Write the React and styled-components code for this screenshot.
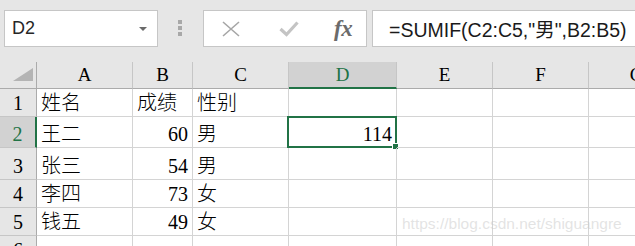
import React from "react";
import styled, { createGlobalStyle } from "styled-components";

const GlobalStyle = createGlobalStyle`
  body {
    margin: 0;
    background: #ffffff;
    overflow: hidden;
  }
`;

const Page = styled.div`
  position: relative;
  width: 635px;
  height: 246px;
  overflow: hidden;
  background: #ffffff;
`;

const Toolbar = styled.div`
  height: 62px;
  box-sizing: border-box;
  padding: 10px 0 0 4px;
  display: flex;
  align-items: flex-start;
  background: #e6e6e6;
`;

const Box = styled.div`
  height: 37px;
  box-sizing: border-box;
  border: 1px solid #c6c6c6;
  background: #ffffff;
  display: flex;
  align-items: center;
`;

const NameBox = styled(Box)`
  width: 154px;
  padding: 0 10px 0 7px;
  justify-content: space-between;
  font-family: "Liberation Sans", Arial, sans-serif;
  font-size: 18px;
  color: #262626;
`;

const DropArrow = styled.span`
  width: 0;
  height: 0;
  border-left: 4px solid transparent;
  border-right: 4px solid transparent;
  border-top: 4px solid #6a6a6a;
  margin-top: 1px;
`;

const Grip = styled.div`
  margin: 10px 21px 0 20px;
  display: flex;
  flex-direction: column;
  gap: 2px;
  & span {
    width: 4px;
    height: 4px;
    background: #a8a8a8;
  }
`;

const FxButtons = styled(Box)`
  width: 164px;
  padding: 0 0 0 18px;
`;

const IconSlot = styled.div`
  width: ${p => p.w}px;
  display: flex;
  align-items: center;
  justify-content: flex-start;
`;

const FxLabel = styled.span`
  font-family: "Liberation Serif", "Times New Roman", serif;
  font-style: italic;
  font-weight: 700;
  font-size: 23px;
  color: #6b6b6b;
  letter-spacing: -0.5px;
`;

const FormulaBox = styled(Box)`
  flex: 1;
  margin-left: 5px;
  border-right: none;
  padding-left: 16px;
  font-family: "Liberation Sans", Arial, "Noto Sans CJK SC", sans-serif;
  font-size: 19.5px;
  color: #1a1a1a;
  white-space: nowrap;
`;

const Sheet = styled.div`
  display: grid;
  grid-template-columns: 37px 96px 60px 96px 108px 96px 96px 96px;
  grid-template-rows: 27px 28px 31px 32px 28px 28px 28px;
  height: 184px;
  overflow: hidden;
  font-family: "Liberation Serif", "Noto Sans CJK SC", serif;
  color: #000000;
`;

const Corner = styled.div`
  position: relative;
  background: #e6e6e6;
  border-right: 1px solid #ababab;
  border-bottom: 1px solid #ababab;
  box-sizing: border-box;
  &::after {
    content: "";
    position: absolute;
    right: 3px;
    bottom: 7px;
    width: 0;
    height: 0;
    border-left: 20px solid transparent;
    border-bottom: 13px solid #b4b4b4;
  }
`;

const ColHead = styled.div`
  box-sizing: border-box;
  background: ${p => (p.active ? "#d2d2d2" : "#e6e6e6")};
  border-right: 1px solid #c6c6c6;
  border-bottom: ${p => (p.active ? "2px solid #217346" : "1px solid #ababab")};
  color: ${p => (p.active ? "#217346" : "#000000")};
  font-size: 19px;
  display: flex;
  align-items: center;
  justify-content: center;
  padding-top: ${p => (p.active ? "1px" : "0")};
`;

const RowHead = styled.div`
  box-sizing: border-box;
  background: ${p => (p.active ? "#d2d2d2" : "#e6e6e6")};
  border-right: ${p => (p.active ? "2px solid #217346" : "1px solid #ababab")};
  border-bottom: 1px solid #c6c6c6;
  color: ${p => (p.active ? "#217346" : "#000000")};
  font-size: 20px;
  display: flex;
  align-items: flex-end;
  justify-content: center;
  padding-bottom: 1px;
  line-height: 24px;
`;

const Cell = styled.div`
  position: relative;
  box-sizing: border-box;
  border-right: 1px solid #d4d4d4;
  border-bottom: 1px solid #d4d4d4;
  font-size: 20px;
  font-weight: 300;
  line-height: 24px;
  display: flex;
  align-items: flex-end;
  justify-content: ${p => (p.num ? "flex-end" : "flex-start")};
  padding: 0 4px 1px 4px;
  white-space: nowrap;

  ${p =>
    p.selected &&
    `
    &::before {
      content: "";
      position: absolute;
      top: -1px;
      left: -2px;
      right: -1px;
      bottom: -1px;
      border: 2px solid #217346;
      pointer-events: none;
    }
    &::after {
      content: "";
      position: absolute;
      right: -3px;
      bottom: -3px;
      width: 5px;
      height: 5px;
      background: #217346;
      border: 1px solid #ffffff;
    }
  `}
`;

const Watermark = styled.div`
  position: absolute;
  left: 402px;
  top: 215px;
  font-family: "Liberation Sans", Arial, sans-serif;
  font-size: 15.5px;
  color: rgba(200, 200, 200, 0.5);
  white-space: nowrap;
`;

const columns = ["A", "B", "C", "D", "E", "F", "G"];

const rows = [
  ["姓名", "成绩", "性别", "", "", "", ""],
  ["王二", "60", "男", "114", "", "", ""],
  ["张三", "54", "男", "", "", "", ""],
  ["李四", "73", "女", "", "", "", ""],
  ["钱五", "49", "女", "", "", "", ""],
  ["", "", "", "", "", "", ""],
];

const isNum = v => /^\d+$/.test(v);

const CancelIcon = () => (
  <svg width="18" height="16" viewBox="0 0 18 16">
    <path d="M1 1 L17 15 M17 1 L1 15" stroke="#a6a6a6" strokeWidth="1.6" fill="none" />
  </svg>
);

const CheckIcon = () => (
  <svg width="20" height="16" viewBox="0 0 20 16">
    <path d="M1.5 8 L7.5 13.5 L18.5 1.5" stroke="#c4c4c4" strokeWidth="3.2" fill="none" />
  </svg>
);

export default function App() {
  return (
    <Page>
      <GlobalStyle />
      <Toolbar>
        <NameBox>
          <span>D2</span>
          <DropArrow />
        </NameBox>
        <Grip>
          <span />
          <span />
          <span />
        </Grip>
        <FxButtons>
          <IconSlot w={57}>
            <CancelIcon />
          </IconSlot>
          <IconSlot w={55}>
            <CheckIcon />
          </IconSlot>
          <IconSlot w={30}>
            <FxLabel>fx</FxLabel>
          </IconSlot>
        </FxButtons>
        <FormulaBox>=SUMIF(C2:C5,"男",B2:B5)</FormulaBox>
      </Toolbar>
      <Sheet>
        <Corner />
        {columns.map(c => (
          <ColHead key={`col${c}`} active={c === "D"}>
            {c}
          </ColHead>
        ))}
        {rows.map((row, r) => (
          <React.Fragment key={`row${r}`}>
            <RowHead active={r === 1}>{r + 1}</RowHead>
            {row.map((v, c) => (
              <Cell key={`cell${r}-${c}`} num={isNum(v)} selected={r === 1 && c === 3}>
                {v}
              </Cell>
            ))}
          </React.Fragment>
        ))}
      </Sheet>
      <Watermark>https://blog.csdn.net/shiguangre</Watermark>
    </Page>
  );
}
